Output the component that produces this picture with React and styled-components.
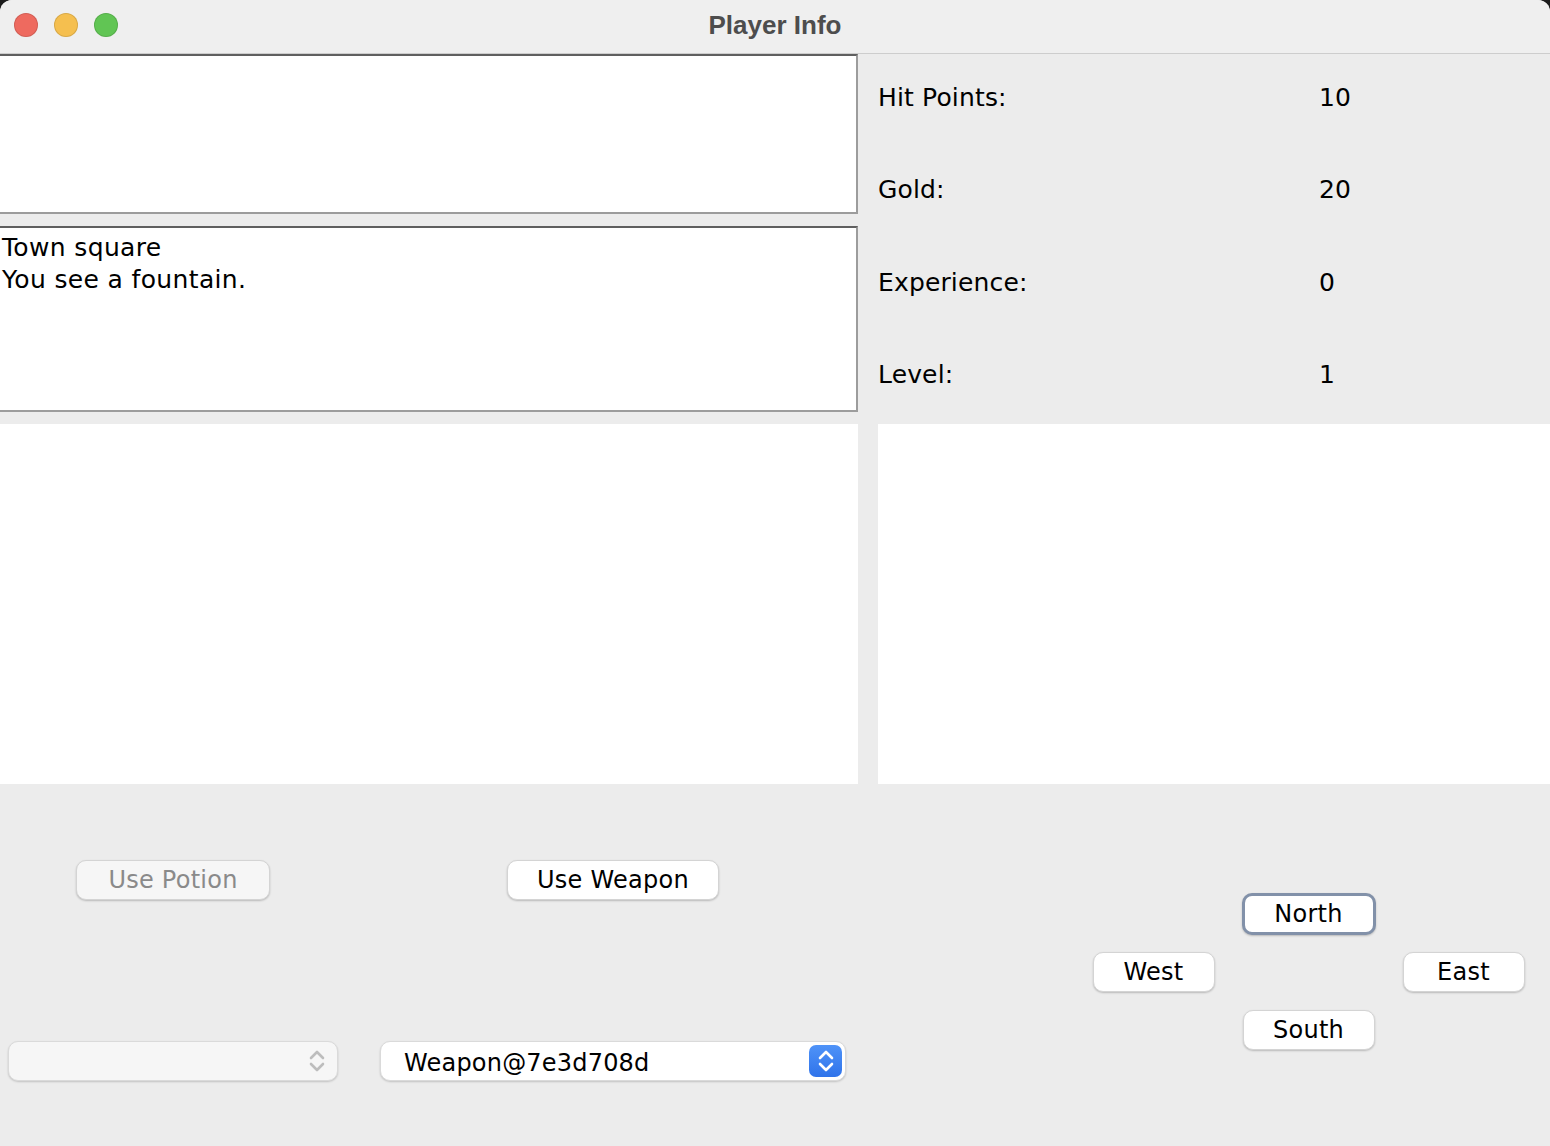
import React from 'react';
import styled, { createGlobalStyle } from 'styled-components';

const Global = createGlobalStyle`
  html, body {
    margin: 0;
    padding: 0;
    background: #1c1c1c;
  }
  * {
    box-sizing: border-box;
  }
`;

const Window = styled.div`
  width: 1550px;
  height: 1146px;
  display: flex;
  flex-flow: column nowrap;
  background-color: #ececec;
  border-radius: 12px 12px 0 0;
  overflow: hidden;
  font: normal normal 400 24px 'DejaVu Sans', sans-serif;
  color: #000;
`;

const TitleBar = styled.header`
  position: relative;
  height: 54px;
  flex: none;
  display: flex;
  align-items: center;
  justify-content: center;
  background-color: #efefef;
  border-bottom: 1px solid #cdcdcd;
`;

const Lights = styled.div`
  position: absolute;
  left: 14px;
  top: 13px;
  display: flex;
  gap: 16px;
`;

const Light = styled.span`
  width: 24px;
  height: 24px;
  border-radius: 50%;
  background-color: ${p => p.$color};
  box-shadow: inset 0 0 0 1px rgba(0, 0, 0, 0.12);
`;

const Title = styled.h1`
  margin: 0 0 3px;
  font: normal normal 700 26px 'Liberation Sans', Arial, sans-serif;
  color: #4d4d4d;
`;

const Top = styled.section`
  height: 370px;
  flex: none;
  display: grid;
  grid-template-columns: 858px 1fr;
`;

const TextStack = styled.div`
  display: flex;
  flex-flow: column nowrap;
  gap: 12px;
`;

const TextArea = styled.div`
  height: ${p => p.$h}px;
  padding: 4px 2px;
  background-color: #fff;
  border-style: solid;
  border-width: 2px 2px 2px 0;
  border-color: #5f5f5f #9c9c9c #9c9c9c transparent;
  font-size: 25px;
  line-height: 32px;
  letter-spacing: 0.35px;
  white-space: pre-line;
`;

const Stats = styled.dl`
  margin: 0;
  padding: 0 0 0 20px;
  display: grid;
  grid-template-columns: 441px 1fr;
  grid-auto-rows: 1fr;
  align-items: center;
  font-size: 25px;
`;

const Label = styled.dt`
  margin: 0;
  padding-bottom: 6px;
  letter-spacing: 0.15px;
`;

const Value = styled.dd`
  margin: 0;
  padding-bottom: 6px;
`;

const Middle = styled.section`
  height: 360px;
  flex: none;
  display: grid;
  grid-template-columns: 858px 1fr;
  gap: 20px;
`;

const Blank = styled.div`
  background-color: #fff;
`;

const Bottom = styled.section`
  flex: 1;
  display: flex;
`;

const Controls = styled.div`
  display: grid;
  grid-template-columns: 346px 534px;
  grid-template-rows: 192px 1fr;
  align-items: center;
  justify-items: center;
`;

const Button = styled.button`
  height: ${p => (p.$focus ? 42 : 40)}px;
  width: ${p => p.$w}px;
  padding: 0;
  border-radius: 10px;
  border: ${p => (p.$focus ? '3px solid #8291a9' : '1px solid #d4d4d4')};
  background-color: ${p => (p.disabled ? '#f6f6f6' : '#fff')};
  color: ${p => (p.disabled ? '#8a8a8a' : '#000')};
  box-shadow: 0 1px 2px rgba(0, 0, 0, 0.22);
  font: normal normal 400 24px 'DejaVu Sans', sans-serif;
  letter-spacing: 0.25px;
  cursor: pointer;
`;

const Combo = styled.div`
  position: relative;
  height: 40px;
  width: ${p => p.$w}px;
  display: flex;
  align-items: center;
  padding: 3px 0 0 23px;
  border-radius: 10px;
  border: 1px solid #dadada;
  background-color: ${p => (p.$disabled ? '#f6f6f6' : '#fff')};
  box-shadow: 0 1px 2px rgba(0, 0, 0, 0.18);
  font-size: 24px;
  letter-spacing: 0.2px;
`;

const Arrow = styled.span`
  position: absolute;
  right: ${p => (p.$active ? 3 : 10)}px;
  top: 50%;
  transform: translateY(-50%);
  width: ${p => (p.$active ? 33 : 20)}px;
  height: ${p => (p.$active ? 32 : 30)}px;
  display: flex;
  align-items: center;
  justify-content: center;
  border-radius: 7px;
  background: ${p => (p.$active ? 'linear-gradient(#4f93f8, #2f73ea)' : 'transparent')};
`;

const Pad = styled.div`
  padding: 101px 0 0 196px;
  display: grid;
  grid-template-columns: repeat(3, 155px);
  grid-template-rows: repeat(3, 58px);
  align-items: center;
  justify-items: center;
  align-content: start;
`;

const PadCell = styled.div`
  grid-column: ${p => p.$col};
  grid-row: ${p => p.$row};
`;

const Chevrons = ({ color }) => (
  <svg width="18" height="26" viewBox="0 0 18 26" fill="none" stroke={color} strokeWidth="2.6" strokeLinecap="round" strokeLinejoin="round">
    <path d="M3 10 L9 4 L15 10" />
    <path d="M3 16 L9 22 L15 16" />
  </svg>
);

const stats = [
  ['Hit Points:', '10'],
  ['Gold:', '20'],
  ['Experience:', '0'],
  ['Level:', '1'],
];

const App = () => {
  return (
    <>
      <Global />
      <Window>
        <TitleBar>
          <Lights>
            <Light $color="#ee6a5f" />
            <Light $color="#f5bf4f" />
            <Light $color="#61c554" />
          </Lights>
          <Title>Player Info</Title>
        </TitleBar>
        <Top>
          <TextStack>
            <TextArea $h={160} />
            <TextArea $h={186}>{'Town square\nYou see a fountain.'}</TextArea>
          </TextStack>
          <Stats>
            {stats.map(([k, v]) => (
              <React.Fragment key={k}>
                <Label>{k}</Label>
                <Value>{v}</Value>
              </React.Fragment>
            ))}
          </Stats>
        </Top>
        <Middle>
          <Blank />
          <Blank />
        </Middle>
        <Bottom>
          <Controls>
            <Button $w={194} disabled>Use Potion</Button>
            <Button $w={212}>Use Weapon</Button>
            <Combo $w={330} $disabled>
              <Arrow>
                <Chevrons color="#bdbdbd" />
              </Arrow>
            </Combo>
            <Combo $w={466}>
              Weapon@7e3d708d
              <Arrow $active>
                <Chevrons color="#fff" />
              </Arrow>
            </Combo>
          </Controls>
          <Pad>
            <PadCell $col={2} $row={1}>
              <Button $w={134} $focus>North</Button>
            </PadCell>
            <PadCell $col={1} $row={2}>
              <Button $w={122}>West</Button>
            </PadCell>
            <PadCell $col={3} $row={2}>
              <Button $w={122}>East</Button>
            </PadCell>
            <PadCell $col={2} $row={3}>
              <Button $w={132}>South</Button>
            </PadCell>
          </Pad>
        </Bottom>
      </Window>
    </>
  );
};

export default App;
